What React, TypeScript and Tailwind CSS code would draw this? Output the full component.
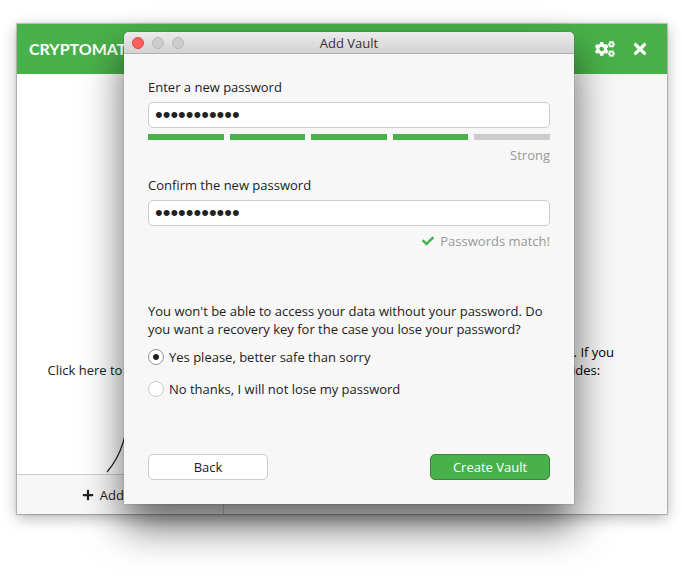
import React, { useState } from 'react';
import { FaCheck, FaCogs, FaPlus, FaTimes } from 'react-icons/fa';

const STRENGTH_SEGMENTS = 5;

interface PasswordFieldProps {
  id: string;
  label: string;
  value: string;
  onChange: (value: string) => void;
}

const PasswordField: React.FC<PasswordFieldProps> = ({ id, label, value, onChange }) => (
  <div className="flex flex-col gap-1.5">
    <label htmlFor={id}>{label}</label>
    <input
      id={id}
      type="password"
      value={value}
      onChange={(e) => onChange(e.target.value)}
      className="h-[26px] w-full rounded-[5px] border border-[#cccccc] bg-white px-1.5 font-['Liberation_Sans',sans-serif] text-[22px] text-[#222222] outline-none"
    />
  </div>
);

const StrengthMeter: React.FC<{ score: number }> = ({ score }) => (
  <div className="flex gap-1.5">
    {Array.from({ length: STRENGTH_SEGMENTS }, (_, i) => (
      <div key={i} className={`h-1.5 flex-1 ${i < score ? 'bg-[#49b149]' : 'bg-[#cccccc]'}`} />
    ))}
  </div>
);

interface RadioOptionProps {
  label: string;
  checked: boolean;
  onSelect: () => void;
}

const RadioOption: React.FC<RadioOptionProps> = ({ label, checked, onSelect }) => (
  <label className="flex items-center gap-[5px]">
    <input
      type="radio"
      name="recovery-key"
      checked={checked}
      onChange={onSelect}
      className="size-4 appearance-none rounded-full border border-[#cccccc] bg-white checked:border-[#999999] checked:bg-[radial-gradient(circle,#222222_2.5px,transparent_3.5px)]"
    />
    {label}
  </label>
);

const MainWindow: React.FC = () => (
  <div className="flex h-[490px] flex-col bg-white shadow-[0_0_1px_1px_rgba(0,0,0,0.2),0_4px_14px_rgba(0,0,0,0.3)]">
    <header className="flex h-[50px] shrink-0 items-center justify-between bg-[#49b149] px-3 text-white">
      <h1 className="font-['Lato',sans-serif] text-base font-bold">CRYPTOMATOR</h1>
      <div className="flex items-center gap-4 pr-1.5">
        <button aria-label="Preferences">
          <FaCogs className="h-4 w-5" />
        </button>
        <button aria-label="Close">
          <FaTimes className="size-[18px]" />
        </button>
      </div>
    </header>
    <div className="flex flex-1">
      <aside className="flex w-[207px] flex-col border-r border-[#cccccc]">
        <div className="flex flex-1 flex-col items-center justify-end pb-px">
          <p className="pb-2.5">Click here to add a vault</p>
          <svg className="h-[84px] w-14" viewBox="0 0 56 84" fill="none" stroke="#222222" strokeWidth="1.2">
            <path d="M15 83 Q40 54 36 0" />
          </svg>
        </div>
        <button className="flex h-10 items-center justify-center gap-1.5 border-t border-[#cccccc] bg-[#f7f7f7]">
          <FaPlus className="size-3" />
          Add Vault
        </button>
      </aside>
      <main className="flex flex-1 flex-col justify-end bg-[#f7f7f7] pr-12 pb-[135px] pl-5">
        <p className="text-center text-black">
          Thanks for choosing Cryptomator to protect your files. If you need any assistance, take a look at the
          following guides:
        </p>
      </main>
    </div>
  </div>
);

const AddVaultDialog: React.FC = () => {
  const [password, setPassword] = useState('correcthors');
  const [confirmation, setConfirmation] = useState('correcthors');
  const [wantsKey, setWantsKey] = useState(true);

  return (
    <div
      role="dialog"
      aria-labelledby="dialog-title"
      className="absolute top-2 right-[93px] left-[107px] rounded-t-[5px] bg-[#f7f7f7] shadow-[0_0_1px_rgba(0,0,0,0.5),0_22px_40px_rgba(0,0,0,0.6)]"
    >
      <div className="relative flex h-[22px] items-center justify-center rounded-t-[5px] border-b border-[#b1b1b1] bg-linear-to-b from-[#ebebeb] to-[#d3d3d3]">
        <div className="absolute left-2 flex gap-2">
          <button aria-label="Close dialog" className="size-3 rounded-full border border-[#e2463f] bg-[#fc605b]" />
          <button aria-label="Minimize" disabled className="size-3 rounded-full border border-[#b8b8b8] bg-[#cdcdcd]" />
          <button aria-label="Zoom" disabled className="size-3 rounded-full border border-[#b8b8b8] bg-[#cdcdcd]" />
        </div>
        <h2 id="dialog-title" className="text-[#333333]">Add Vault</h2>
      </div>

      <form className="flex flex-col p-6" onSubmit={(e) => e.preventDefault()}>
        <div className="flex flex-col gap-1.5">
          <PasswordField id="password" label="Enter a new password" value={password} onChange={setPassword} />
          <StrengthMeter score={4} />
          <p className="text-right text-[#999999]">Strong</p>
        </div>

        <div className="mt-3 flex flex-col gap-1.5">
          <PasswordField
            id="confirmation"
            label="Confirm the new password"
            value={confirmation}
            onChange={setConfirmation}
          />
          <p className="flex h-[18px] items-center justify-end gap-1.5 text-[#999999]">
            {password === confirmation && (
              <>
                <FaCheck className="size-3 text-[#49b149]" />
                Passwords match!
              </>
            )}
          </p>
        </div>

        <fieldset className="mt-[52px]">
          <legend>
            You won't be able to access your data without your password. Do you want a recovery key for the case you
            lose your password?
          </legend>
          <div className="mt-2.5 flex flex-col gap-3.5">
            <RadioOption
              label="Yes please, better safe than sorry"
              checked={wantsKey}
              onSelect={() => setWantsKey(true)}
            />
            <RadioOption
              label="No thanks, I will not lose my password"
              checked={!wantsKey}
              onSelect={() => setWantsKey(false)}
            />
          </div>
        </fieldset>

        <div className="mt-14 flex justify-between">
          <button type="button" className="h-[26px] w-[120px] rounded-[5px] border border-[#cccccc] bg-white">
            Back
          </button>
          <button
            type="submit"
            className="h-[26px] w-[120px] rounded-[5px] border border-[#3a833b] bg-[#49b149] text-white"
          >
            Create Vault
          </button>
        </div>
      </form>
    </div>
  );
};

export default function App() {
  return (
    <div className="min-h-screen overflow-hidden bg-white px-[17px] pt-6 pb-[70px] font-['Open_Sans',sans-serif] text-[13px] leading-[18px] text-[#222222]">
      <div className="relative">
        <MainWindow />
        <AddVaultDialog />
      </div>
    </div>
  );
}
